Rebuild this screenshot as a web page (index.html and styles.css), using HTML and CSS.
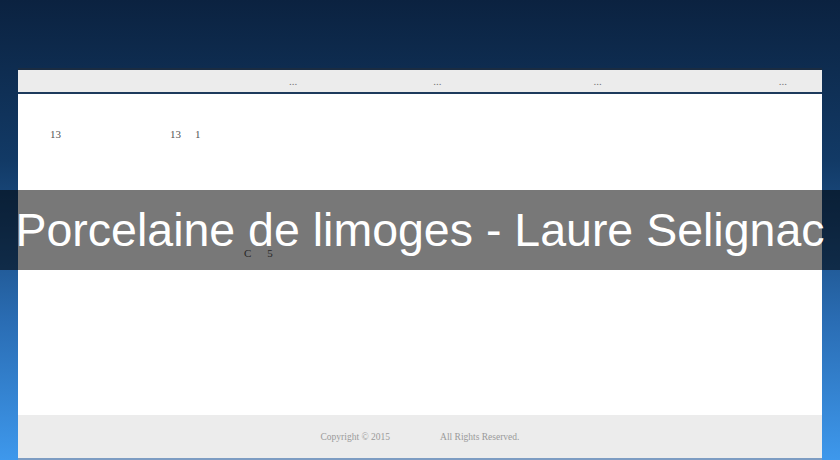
FILE: index.html
```html
<!DOCTYPE html>
<html lang="fr">
<head>
    <meta charset="UTF-8">
    <meta name="viewport" content="width=device-width, initial-scale=1.0">
    <title>Porcelaine de limoges - Laure Selignac</title>
    <link rel="stylesheet" href="styles.css">
</head>
<body>
    <div class="page">
        <div class="nav">
            <span class="nav-item first">...</span>
            <span class="nav-item second">...</span>
            <span class="nav-item third">...</span>
            <span class="nav-item fourth">...</span>
        </div>

        <div class="content">
            <div class="row row-top">
                <span class="num a">13</span>
                <span class="num b">13</span>
                <span class="num c">1</span>
            </div>
            <div class="row row-mid">
                <span class="num d">C</span>
                <span class="num e">5</span>
            </div>
        </div>

        <div class="footer">
            <span>Copyright &copy; 2015</span>
            <span>All Rights Reserved.</span>
        </div>
    </div>

    <div class="banner">
        <h1>Porcelaine de limoges - Laure Selignac</h1>
    </div>
</body>
</html>
```

FILE: styles.css
```css
html, body {
    height: 100%;
}

body {
    margin: 0;
    font-family: "Liberation Serif", serif;
    background: linear-gradient(to bottom, #0b2240 0%, #123a66 35%, #2a6db4 70%, #3e98ec 100%);
    overflow: hidden;
}

.page {
    width: 804px;
    margin: 68px auto 0;
    border-top: 2px solid #1a2c42;
}

.nav {
    display: flex;
    height: 22px;
    align-items: center;
    background: #ececec;
    border-bottom: 2px solid #1d3a5c;
    font-size: 11px;
    color: #777;
}

.nav-item.first { margin-left: 271px; }
.nav-item.second { margin-left: 136px; }
.nav-item.third { margin-left: 152px; }
.nav-item.fourth { margin-left: 177px; }

.content {
    height: 321px;
    background: #fff;
    font-size: 11px;
    color: #555;
}

.row {
    display: flex;
}

.row-top {
    padding-top: 34px;
}

.row-mid {
    padding-top: 107px;
}

.num.a { margin-left: 32px; }
.num.b { margin-left: 109px; }
.num.c { margin-left: 14px; }
.num.d { margin-left: 226px; }
.num.e { margin-left: 16px; }

.footer {
    display: flex;
    justify-content: center;
    align-items: center;
    gap: 50px;
    height: 43px;
    background: #ececec;
    border-bottom: 2px solid #7d9cc2;
    font-size: 9.5px;
    color: #9a9a9a;
}

.banner {
    position: absolute;
    top: 190px;
    left: 0;
    right: 0;
    height: 80px;
    background: rgba(0, 0, 0, 0.53);
    display: flex;
    align-items: center;
    justify-content: center;
}

.banner h1 {
    margin: 0;
    font-family: "Liberation Sans", Arial, sans-serif;
    font-weight: normal;
    font-size: 46.5px;
    color: #fff;
    white-space: nowrap;
}
```
